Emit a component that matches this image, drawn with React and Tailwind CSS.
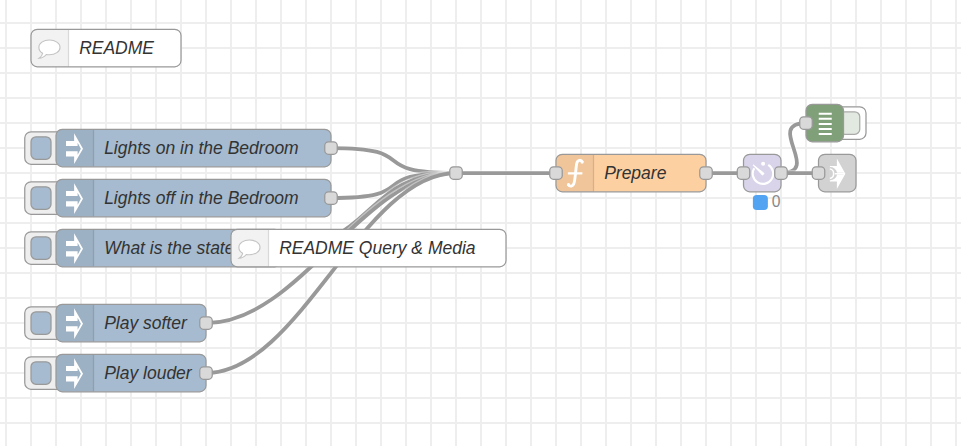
import React from "react";

const NODE_WIDTH = 100;

// Bezier between two ports; short links get a proportionally smaller bend.
function linkPath(x1, y1, x2, y2) {
  const delta = Math.hypot(x2 - x1, y2 - y1);
  const bend = NODE_WIDTH * (delta < NODE_WIDTH ? 0.75 * (delta / NODE_WIDTH) : 0.75);
  return `M${x1} ${y1}C${x1 + bend} ${y1} ${x2 - bend} ${y2} ${x2} ${y2}`;
}

const links = [
  [260, 100, 360, 120],
  [260, 140, 360, 120],
  [220, 180, 360, 120],
  [160, 240, 360, 120],
  [160, 280, 360, 120],
  [360, 120, 440, 120],
  [560, 120, 590, 120],
  [620, 120, 640, 80],
  [620, 120, 650, 120],
];

function InjectIcon() {
  return (
    <svg viewBox="0 0 30 30" className="h-[30px] w-[30px]" fill="#fff">
      <path d="M8.5 8.8H15V2.7L22.1 15L15 27.3V21.2H8.5V17.1H17.8V19.8L20.4 15L17.8 10.2V12.9H8.5Z" />
    </svg>
  );
}

function CommentIcon() {
  return (
    <svg viewBox="0 0 30 30" className="h-[30px] w-[30px]" fill="#fff" stroke="#c4c4c4" strokeWidth="0.9">
      <path d="M15.2 8.1C20 8.1 23.7 10.7 23.7 14C23.7 17.3 20 19.9 15.2 19.9C14.3 19.9 13.5 19.8 12.7 19.7C11.2 21.6 9.3 22.6 7 22.7C8.6 21.6 9.5 20.3 9.8 18.7C7.9 17.6 6.8 16 6.8 14C6.8 10.7 10.4 8.1 15.2 8.1Z" />
    </svg>
  );
}

function FunctionIcon() {
  return (
    <svg viewBox="0 0 30 30" className="h-[30px] w-[30px]" fill="none" stroke="#fff" strokeWidth="2.3">
      <path d="M21.8 5.8C20.5 3.6 17.8 3.8 17.1 6.8C16.3 10.8 16.1 17.8 15 22.3C14.2 25.5 11.6 25.7 10.2 23.8" />
      <path d="M10 14.8H21.6" strokeWidth="1.7" />
      <circle cx="21.4" cy="5.7" r="0.7" strokeWidth="1.2" />
      <circle cx="10.5" cy="23.7" r="0.7" strokeWidth="1.2" />
    </svg>
  );
}

function TimerIcon() {
  return (
    <svg viewBox="0 0 30 30" className="h-[30px] w-[30px]" fill="none" stroke="#fff" strokeWidth="1.7">
      <path d="M19.3 8A8.2 8.2 0 1 1 8.1 10.7" />
      <path d="M7.4 8.2L15.8 14.8L14.7 16Z" fill="#fff" strokeWidth="0.9" strokeLinejoin="round" />
      <circle cx="15.2" cy="7" r="1.6" fill="#fff" stroke="none" />
    </svg>
  );
}

function DebugIcon() {
  return (
    <svg viewBox="0 0 30 30" className="h-[30px] w-[30px]" stroke="#fff" strokeWidth="1.6">
      <path d="M9.7 7H20.1M9.7 11.1H20.1M9.7 15.2H20.1M9.7 19.2H20.1M9.7 23.2H20.1" />
    </svg>
  );
}

function LinkIcon() {
  return (
    <svg viewBox="0 0 30 30" className="h-[30px] w-[30px]">
      <path fill="#fff" d="M8.6 8.8H14.2V2.8L21 15L14.2 27.2V21.2H8.6Z" />
      <path fill="#d2d2d2" d="M8.4 9.7A5.6 5.6 0 0 1 14.4 14.3H19.5V15.7H14.4A5.6 5.6 0 0 1 8.4 20.3Z" />
      <path fill="none" stroke="#fff" strokeWidth="1.2" d="M8.6 11.2A3.9 3.9 0 0 1 8.6 18.8M12.6 15H20" />
    </svg>
  );
}

function Port({ side }) {
  return (
    <span
      className={`absolute top-[10px] h-[11px] w-[11px] rounded-[3.5px] border border-[#999] bg-[#d9d9d9] ${
        side === "in" ? "-left-[5px]" : "-right-[5px]"
      }`}
    />
  );
}

function InjectButton() {
  return (
    <span className="absolute -left-[25px] top-[2px] h-[27px] w-[33px] rounded-[5.5px] border border-[#999] bg-[#eee] pl-[4px] pt-[3px]">
      <span className="block h-[19px] w-[17px] rounded-[4.5px] border border-[#999] bg-[#a6bbcf]" />
    </span>
  );
}

function DebugButton() {
  return (
    <span className="absolute left-[16px] top-[2px] h-[27px] w-[33px] rounded-[5.5px] border border-[#999] bg-white pl-[10px] pt-[3px]">
      <span className="block h-[19px] w-[17px] rounded-[4.5px] border border-[#aaa] bg-[#e2e9e0]" />
    </span>
  );
}

function FlowNode({ place, color, icon, label, button, input, output }) {
  return (
    <div className={`absolute h-[31px] ${place}`}>
      {button}
      <div className={`relative flex h-[31px] w-full overflow-hidden rounded-[5.5px] border border-[#999] ${color}`}>
        <div
          className={`-my-px -ml-px flex w-[31px] shrink-0 items-center justify-center ${
            label ? "border-r border-black/10 bg-black/5" : ""
          }`}
        >
          {icon}
        </div>
        {label && (
          <div className="flex items-center whitespace-pre pb-[1.6px] pl-[8px] text-[14px] italic leading-none text-[#333]">
            {label}
          </div>
        )}
      </div>
      {input && <Port side="in" />}
      {output && <Port side="out" />}
    </div>
  );
}

export default function App() {
  return (
    <main className="relative h-[446px] w-[961px] overflow-hidden bg-white bg-[linear-gradient(to_right,#eee_2px,transparent_2px),linear-gradient(to_bottom,#eee_2px,transparent_2px)] bg-[size:25px_25px] bg-[position:5px_0px,0px_22px] font-['Liberation_Sans',Arial,sans-serif]">
      {/* Flow canvas, zoomed to 125% */}
      <div className="absolute left-0 top-0 h-[340px] w-[764px] origin-top-left [transform:translate(5.375px,22.375px)_scale(1.25)]">
        <svg className="absolute left-0 top-0 overflow-visible" width="764" height="340" fill="none">
          <g transform="translate(0.5 0.5)">
            {links.map((l, i) => (
              <g key={i}>
                <path d={linkPath(...l)} stroke="#fff" strokeWidth="5" strokeOpacity="0.4" />
                <path d={linkPath(...l)} stroke="#999" strokeWidth="3" />
              </g>
            ))}
          </g>
        </svg>

        <FlowNode place="left-[40px] top-[85px] w-[221px]" color="bg-[#a6bbcf]" icon={<InjectIcon />} label="Lights on in the Bedroom" button={<InjectButton />} output />
        <FlowNode place="left-[40px] top-[125px] w-[221px]" color="bg-[#a6bbcf]" icon={<InjectIcon />} label="Lights off in the Bedroom" button={<InjectButton />} output />
        <FlowNode place="left-[40px] top-[165px] w-[181px]" color="bg-[#a6bbcf]" icon={<InjectIcon />} label="What is the state" button={<InjectButton />} output />
        <FlowNode place="left-[40px] top-[225px] w-[121px]" color="bg-[#a6bbcf]" icon={<InjectIcon />} label="Play softer" button={<InjectButton />} output />
        <FlowNode place="left-[40px] top-[265px] w-[121px]" color="bg-[#a6bbcf]" icon={<InjectIcon />} label="Play louder" button={<InjectButton />} output />

        <FlowNode place="left-[20px] top-[5px] w-[121px]" color="bg-white" icon={<CommentIcon />} label="README" />
        <FlowNode place="left-[180px] top-[165px] w-[221px]" color="bg-white" icon={<CommentIcon />} label="README Query & Media" />

        <span className="absolute left-[355px] top-[115px] h-[11px] w-[11px] rounded-[3.5px] border border-[#999] bg-[#d9d9d9]" />

        <FlowNode place="left-[440px] top-[105px] w-[121px]" color="bg-[#fdd0a2]" icon={<FunctionIcon />} label="Prepare" input output />
        <FlowNode place="left-[590px] top-[105px] w-[31px]" color="bg-[#d9d4ea]" icon={<TimerIcon />} input output />
        <FlowNode place="left-[640px] top-[65px] w-[31px]" color="bg-[#80a079]" icon={<DebugIcon />} button={<DebugButton />} input />
        <FlowNode place="left-[650px] top-[105px] w-[31px]" color="bg-[#d2d2d2]" icon={<LinkIcon />} input />

        <div className="absolute left-[598px] top-[138px] flex items-center gap-[3px]">
          <span className="h-[12px] w-[12px] rounded-[3px] bg-[#53a3f3]" />
          <span className="text-[12.5px] leading-[12px] text-[#888]">0</span>
        </div>
      </div>
    </main>
  );
}
